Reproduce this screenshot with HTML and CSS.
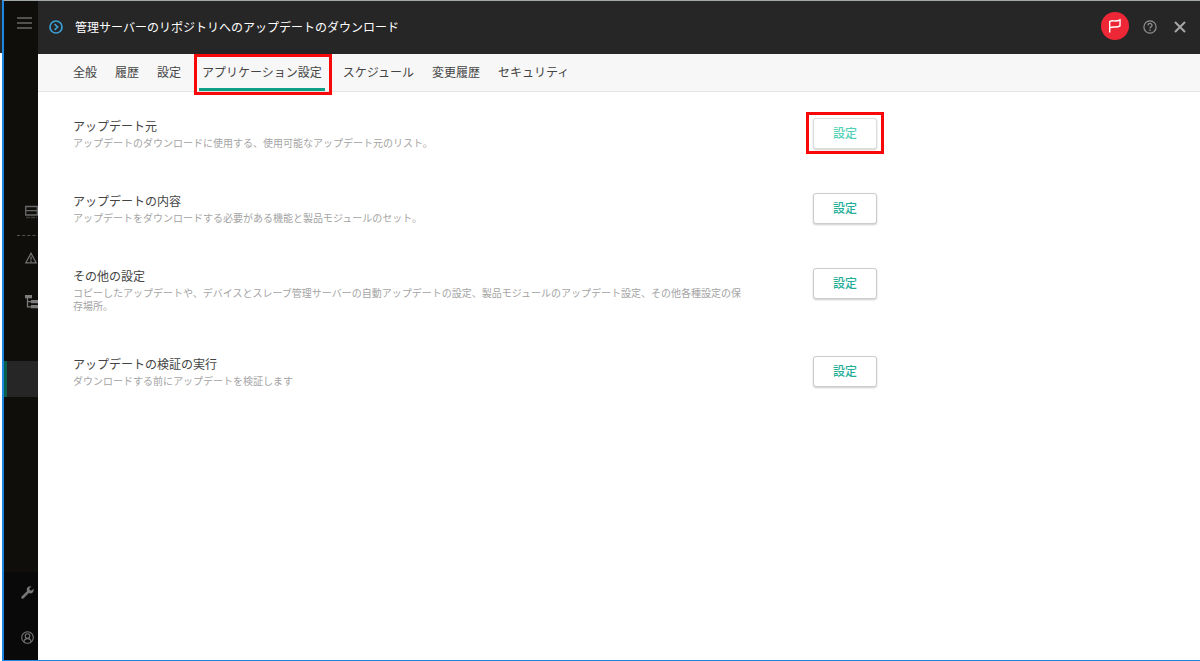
FILE: index.html
```html
<!DOCTYPE html>
<html lang="ja">
<head>
  <meta charset="UTF-8" />
  <meta name="viewport" content="width=device-width, initial-scale=1.0" />
  <title>管理サーバーのリポジトリへのアップデートのダウンロード</title>
  <link rel="stylesheet" href="styles.css">
</head>
<body>
  <div class="app">
    <nav class="sidebar">
      <div class="sidebar-main">
        <button class="side-btn menu-btn" aria-label="メニュー">
          <svg width="16" height="12" viewBox="0 0 16 12" stroke="#686868" stroke-width="1.4"><path d="M0 1h15M0 6h15M0 11h15"/></svg>
        </button>
        <button class="side-btn server-btn" aria-label="サーバー">
          <svg width="13" height="14" viewBox="0 0 13 14" fill="none" stroke="#686868" stroke-width="1.3"><path d="M.7 1.500h11.600v8.500H.7zM.7 5.700h11.600"/><path d="M1 12.500h11" stroke="#3a3a3a" stroke-dasharray="4 1"/></svg>
        </button>
        <hr class="side-line">
        <button class="side-btn alert-btn" aria-label="監視">
          <svg width="12" height="12" viewBox="0 0 12 12" fill="none" stroke="#707070" stroke-width="1.3"><path d="M6 1.200L11.200 10.800H.8z"/><path d="M6 4.500v3.200M6 8.500v1.500"/></svg>
        </button>
        <button class="side-btn tree-btn" aria-label="デバイス">
          <svg width="13" height="14" viewBox="0 0 13 14" fill="#7c7c7c"><path d="M0 0h7v3.200H0zM6 5h7v3.200H6zM6 10h7v3.200H6z"/><path d="M2.500 3v8.800H6M2.500 6.600H6" fill="none" stroke="#7c7c7c" stroke-width="1.300"/></svg>
        </button>
        <div class="side-active"></div>
      </div>
      <div class="sidebar-bottom">
        <button class="side-btn" aria-label="ツール">
          <svg width="13" height="13" viewBox="0 0 24 24" fill="#777"><path d="M1.500 19L11 9.500C10 6 11 3 13.500 1.500C15 .5 17.500 .2 19 .8L15.500 4.500L16 8L19.500 8.500L23.200 5C24 8 23 10.500 21.500 12C19.500 14 17 14.200 14.500 13L5 22.500C3.500 24 .5 23.500 .5 21C.5 20.200 1 19.500 1.500 19z"/></svg>
        </button>
        <button class="side-btn" aria-label="アカウント">
          <svg width="13" height="13" viewBox="0 0 13 13" fill="none" stroke="#777" stroke-width="1.1"><circle cx="6.500" cy="6.500" r="5.800"/><circle cx="6.500" cy="5" r="2.300"/><path d="M3 11c0-4.500 7-4.500 7 0"/></svg>
        </button>
      </div>
    </nav>

    <div class="panel">
      <header class="panel-header">
        <svg class="title-icon" width="14" height="14" viewBox="0 0 14 14" fill="none" stroke="#3b9fd6" stroke-width="1.7"><circle cx="7" cy="7" r="6"/><path d="M5.600 4.200L8.600 7L5.600 9.800"/></svg>
        <h1>管理サーバーのリポジトリへのアップデートのダウンロード</h1>
        <div class="header-actions">
          <button class="flag-btn" aria-label="通知">
            <svg width="14" height="15" viewBox="0 0 14 15" fill="none" stroke="#fff" stroke-width="1.4"><path d="M1.700 14.500V3.500C5 1.500 7 4.500 12 1.800V7.800C8 10.500 5.500 7.500 1.700 10"/></svg>
          </button>
          <button class="icon-btn" aria-label="ヘルプ">
            <svg width="14" height="14" viewBox="0 0 14 14" fill="none" stroke="#919191" stroke-width="1.2"><circle cx="7" cy="7" r="6.100"/><path d="M5 5.500C5 2.800 9 2.800 9 5.400C9 6.800 7 6.800 7 8.500M7 9.500v1.400"/></svg>
          </button>
          <button class="icon-btn" aria-label="閉じる">
            <svg width="12" height="12" viewBox="0 0 12 12" fill="none" stroke="#a6a6a6" stroke-width="2"><path d="M1 1l10 10M11 1L1 11"/></svg>
          </button>
        </div>
      </header>

      <nav class="tabs">
        <a href="#">全般</a>
        <a href="#">履歴</a>
        <a href="#">設定</a>
        <a href="#" class="active">アプリケーション設定</a>
        <a href="#">スケジュール</a>
        <a href="#">変更履歴</a>
        <a href="#">セキュリティ</a>
      </nav>

      <main class="settings">
        <section class="setting">
          <div class="setting-text">
            <h2>アップデート元</h2>
            <p>アップデートのダウンロードに使用する、使用可能なアップデート元のリスト。</p>
          </div>
          <button class="setting-btn marked">設定</button>
        </section>
        <section class="setting">
          <div class="setting-text">
            <h2>アップデートの内容</h2>
            <p>アップデートをダウンロードする必要がある機能と製品モジュールのセット。</p>
          </div>
          <button class="setting-btn">設定</button>
        </section>
        <section class="setting">
          <div class="setting-text">
            <h2>その他の設定</h2>
            <p>コピーしたアップデートや、デバイスとスレーブ管理サーバーの自動アップデートの設定、製品モジュールのアップデート設定、その他各種設定の保存場所。</p>
          </div>
          <button class="setting-btn">設定</button>
        </section>
        <section class="setting">
          <div class="setting-text">
            <h2>アップデートの検証の実行</h2>
            <p>ダウンロードする前にアップデートを検証します</p>
          </div>
          <button class="setting-btn">設定</button>
        </section>
      </main>
    </div>
  </div>
</body>
</html>
```
FILE: styles.css
```css
* {
  box-sizing: border-box;
}

body {
  margin: 0;
  padding-left: 2px;
  font-family: "Noto Sans CJK JP", sans-serif;
  font-size: 12px;
  color: #444;
  background: linear-gradient(#262626 53px, #fff 53px);
}

h1, h2, p {
  margin: 0;
  font-weight: normal;
}

button {
  padding: 0;
  border: none;
  background: none;
  font-family: inherit;
  cursor: pointer;
}

svg {
  display: block;
}

.app {
  display: flex;
  min-height: 100vh;
  border-left: 2px solid #1c86e0;
  border-bottom: 1px solid #1c86e0;
  border-top: 1px solid #a3a8a8;
}

/* sidebar */
.sidebar {
  display: flex;
  flex-direction: column;
  flex: none;
  width: 34px;
  overflow: hidden;
  background: #0f0e0b;
}

.sidebar-main {
  display: flex;
  flex-direction: column;
  flex: 1;
}

.side-btn {
  flex: none;
  margin-left: 21px;
}

.menu-btn {
  margin-top: 16px;
  margin-left: 13px;
}

.server-btn {
  margin-top: 176px;
}

.side-line {
  width: 100%;
  margin: 16px 0 0 13px;
  border: none;
  border-top: 1px dashed #555;
}

.alert-btn {
  margin-top: 16px;
}

.tree-btn {
  margin-top: 31px;
}

.side-active {
  height: 36px;
  margin-top: 52px;
  border-left: 3px solid #075f4c;
  background: #262626;
}

.sidebar-bottom {
  display: flex;
  flex-direction: column;
  gap: 32px;
  padding: 14px 0 16px;
  background: #090909;
}

.sidebar-bottom .side-btn {
  margin-left: 17px;
}

/* panel */
.panel {
  flex: 1;
  min-width: 0;
  background: #fff;
}

.panel-header {
  display: flex;
  align-items: center;
  height: 53px;
  padding: 0 13px 2px 11px;
  color: #fff;
  background: #262626;
}

.panel-header h1 {
  margin-left: 12px;
  font-size: 12px;
  line-height: 20px;
}

.header-actions {
  display: flex;
  align-items: center;
  gap: 14px;
  margin-left: auto;
}

.flag-btn {
  display: flex;
  align-items: center;
  justify-content: center;
  width: 28px;
  height: 28px;
  margin-bottom: 2px;
  border-radius: 50%;
  background: #ee2737;
}

.icon-btn {
  display: flex;
  align-items: center;
  justify-content: center;
  width: 14px;
  height: 28px;
}

.icon-btn + .icon-btn {
  margin-left: 2px;
}

.tabs {
  display: flex;
  gap: 18px;
  padding-left: 35px;
  border-bottom: 1px solid #e4e4e4;
  background: #f7f7f7;
}

.tabs a {
  position: relative;
  height: 37px;
  line-height: 36px;
  color: #444;
  text-decoration: none;
}

.tabs .active {
  padding: 0 3px;
  border-bottom: 3px solid #0f9f85;
}

/* red frames */
.tabs .active::after,
.marked::after {
  content: "";
  position: absolute;
  border: 3px solid #f80808;
}

.tabs .active::after {
  inset: 0 -7px -7px -5px;
}

.marked::after {
  inset: -7px -8px -6px;
}

/* settings */
.settings {
  display: flex;
  flex-direction: column;
  gap: 41px;
  padding: 23px 35px;
}

.setting {
  display: flex;
  align-items: flex-start;
  justify-content: space-between;
  max-width: 804px;
}

.setting h2 {
  font-size: 12px;
  line-height: 21px;
}

.setting p {
  max-width: 67em;
  font-size: 10px;
  line-height: 13px;
  color: #a4a4a4;
}

.setting-btn {
  position: relative;
  width: 64px;
  height: 31px;
  margin-top: 3px;
  padding-bottom: 2px;
  border: 1px solid #ccc;
  border-radius: 3px;
  font-size: 12px;
  font-weight: 500;
  color: #23ad96;
  background: #fff;
  box-shadow: 0 1px 2px rgba(0, 0, 0, 0.2);
}

.setting-btn.marked {
  color: #50d0b6;
  border-color: #ddd;
}
```
